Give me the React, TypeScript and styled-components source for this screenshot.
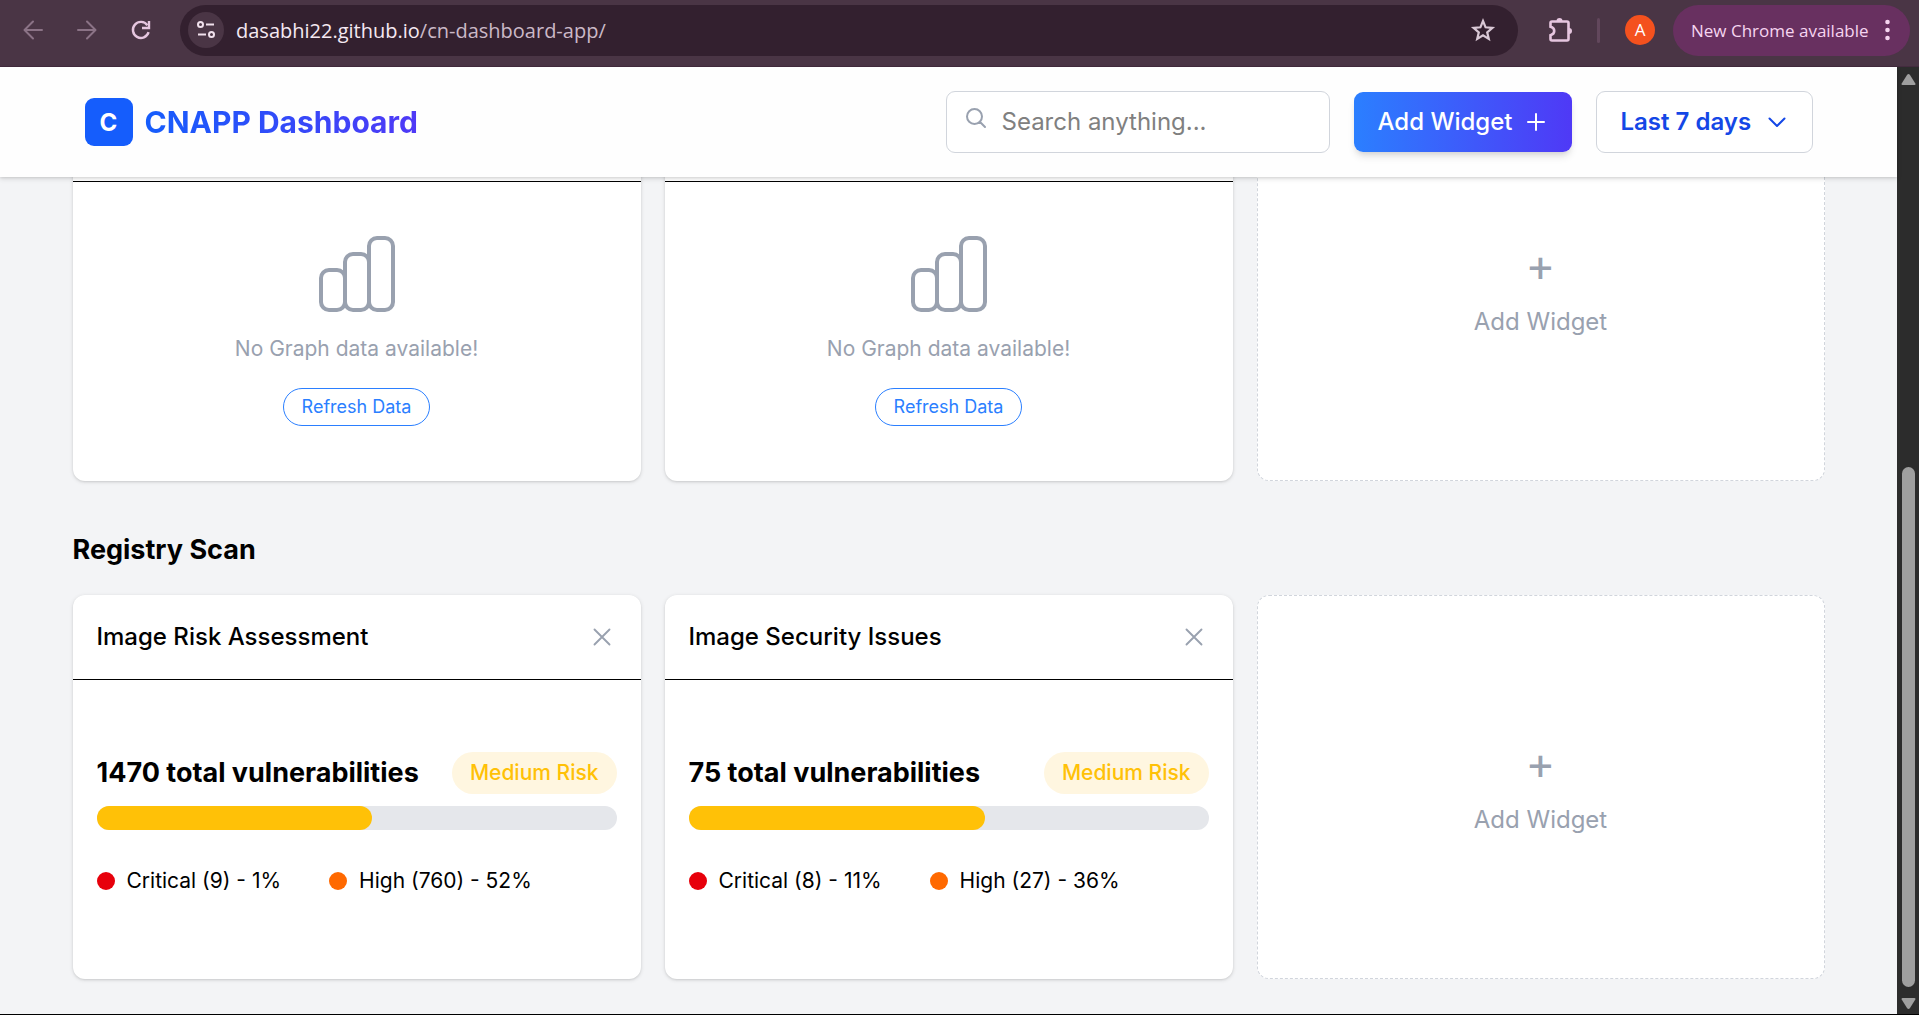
import React from "react";
import styled, { createGlobalStyle } from "styled-components";

const GlobalStyle = createGlobalStyle`
  *, *::before, *::after { box-sizing: border-box; }
  body { margin: 0; background: #f3f4f6; }
  h1, h2, h3, p, ul { margin: 0; padding: 0; }
  ul { list-style: none; }
  button, input, select { font: inherit; margin: 0; }
  button { cursor: pointer; }
`;

const gray = "#99a1af";
const sans = `Inter, "Liberation Sans", sans-serif`;
const systemSans = `"Open Sans", "Noto Sans", sans-serif`;

const Shell = styled.div`
  display: flex;
  flex-direction: column;
  height: 100vh;
  overflow: hidden;
  background: #f3f4f6;
  border-bottom: 1px solid #000;
  color: #000;
  font-family: ${sans};
`;

/* ---------- Browser bar ---------- */

const BrowserBar = styled.div`
  display: flex;
  align-items: center;
  flex: none;
  height: 67px;
  padding: 0 9px 6px 15px;
  background: #4a3545;
  border-bottom: 1px solid #432b3e;
  font-family: ${systemSans};
`;

const BarButton = styled.button<{ $dim?: boolean }>`
  display: grid;
  place-items: center;
  width: 36px;
  height: 36px;
  margin-right: 18px;
  padding: 0;
  border: 0;
  border-radius: 50%;
  background: transparent;
  color: ${(p) => (p.$dim ? "#8b7386" : "#e6c6df")};
`;

const AddressPill = styled.div`
  display: flex;
  align-items: center;
  flex: 1;
  height: 51px;
  margin-left: 3px;
  padding: 0 22px 0 8px;
  border-radius: 26px;
  background: #33202f;
  color: #e3d5df;
`;

const SiteInfo = styled.button`
  display: grid;
  place-items: center;
  width: 36px;
  height: 36px;
  padding: 0;
  border: 0;
  border-radius: 50%;
  background: #4a3545;
  color: #f0e0ec;
`;

const Address = styled.p`
  flex: 1;
  margin-left: 12px;
  padding-top: 2px;
  color: #cbb9c7;
  font-size: 20px;
  line-height: 28px;
`;

const Domain = styled.span`
  color: #f5e9f2;
`;

const StarButton = styled.button`
  display: grid;
  place-items: center;
  padding: 0;
  border: 0;
  background: transparent;
  color: #d9c8d5;
`;

const BarTools = styled.div`
  display: flex;
  align-items: center;
  padding-left: 24px;
`;

const BarDivider = styled.div`
  width: 3px;
  height: 25px;
  margin: 0 25px 0 1px;
  border-radius: 2px;
  background: #62475c;
`;

const Avatar = styled.button`
  width: 30px;
  height: 30px;
  padding: 0;
  border: 0;
  border-radius: 50%;
  background: #f4511e;
  color: #fff;
  font-size: 17px;
  line-height: 30px;
`;

const UpdatePill = styled.button`
  display: flex;
  align-items: center;
  justify-content: space-between;
  width: 237px;
  height: 51px;
  margin-left: 18px;
  padding: 0 20px 0 18px;
  border: 0;
  border-radius: 26px;
  background: #683060;
  color: #f6d5f0;
  font-size: 17px;
  white-space: nowrap;
`;

/* ---------- Page frame ---------- */

const Viewport = styled.div`
  display: flex;
  flex: 1;
  min-height: 0;
`;

const Page = styled.div`
  flex: 1;
  min-width: 0;
`;

const ScrollTrack = styled.div`
  display: flex;
  flex-direction: column;
  align-items: center;
  width: 22px;
  padding: 6px 0 4px;
  background: #2c2c2c;
`;

const ScrollRun = styled.div`
  display: flex;
  flex: 1;
  flex-direction: column;
  justify-content: flex-end;
  padding: 10px 0;
`;

const ScrollThumb = styled.div`
  width: 13px;
  height: 58.4%;
  border-radius: 7px;
  background: #9f9f9f;
`;

/* ---------- App header ---------- */

const Header = styled.header`
  position: sticky;
  top: 0;
  z-index: 1;
  height: 110px;
  background: #fefefe;
  box-shadow: 0 2px 5px rgba(0, 0, 0, 0.12), 0 1px 2px rgba(0, 0, 0, 0.08);
`;

const HeaderInner = styled.div`
  display: flex;
  align-items: center;
  justify-content: space-between;
  max-width: 1728px;
  height: 100%;
  margin: 0 auto;
`;

const Brand = styled.div`
  display: flex;
  align-items: center;
  gap: 12px;
`;

const Logo = styled.div`
  display: grid;
  place-items: center;
  width: 48px;
  height: 48px;
  border-radius: 9px;
  background: #155dfc;
  color: #fff;
  font-size: 24px;
  font-weight: 700;
`;

const BrandName = styled.h1`
  background: linear-gradient(to right, #155dfc, #4f39f6);
  background-clip: text;
  -webkit-background-clip: text;
  color: transparent;
  font-size: 30px;
  font-weight: 700;
  line-height: 42px;
`;

const Controls = styled.div`
  display: flex;
  align-items: center;
  gap: 24px;
  font-size: 24px;
`;

const SearchBox = styled.label`
  display: flex;
  align-items: center;
  gap: 14px;
  width: 384px;
  height: 62px;
  padding: 0 17px;
  border: 1px solid #d1d5dc;
  border-radius: 9px;
  background: #fff;
  color: ${gray};

  svg {
    flex: none;
    margin-bottom: 8px;
  }
`;

const SearchInput = styled.input`
  width: 100%;
  min-width: 0;
  padding: 0 0 2px;
  border: 0;
  outline: 0;
  background: transparent;
  color: #000;

  &::placeholder {
    color: #808080;
    opacity: 1;
  }
`;

const PrimaryButton = styled.button`
  display: flex;
  align-items: center;
  gap: 11px;
  height: 60px;
  padding: 0 24px 1px;
  border: 0;
  border-radius: 9px;
  background: linear-gradient(to right, #2b7fff, #4f39f6);
  box-shadow: 0 6px 9px -2px rgba(0, 0, 0, 0.12), 0 3px 6px -3px rgba(0, 0, 0, 0.12);
  color: #fff;
  font-weight: 500;
  white-space: nowrap;
`;

const RangePicker = styled.div`
  display: grid;
  align-items: center;
  color: #1447e6;

  > * {
    grid-area: 1 / 1;
  }

  svg {
    justify-self: end;
    margin-right: 24px;
    pointer-events: none;
  }
`;

const RangeSelect = styled.select`
  appearance: none;
  height: 62px;
  padding: 0 60px 2px 24px;
  border: 1px solid #d1d5dc;
  border-radius: 9px;
  background: #fff;
  color: inherit;
  font-weight: 600;
`;

/* ---------- Sections and cards ---------- */

const Main = styled.main`
  display: flex;
  flex-direction: column;
  gap: 48px;
  max-width: 1800px;
  margin: -80px auto 0;
  padding: 0 24px 35px;
`;

const SectionTitle = styled.h2`
  margin-bottom: 24px;
  font-size: 27px;
  font-weight: 700;
  line-height: 42px;
`;

const CardGrid = styled.div`
  display: grid;
  grid-template-columns: repeat(3, minmax(0, 1fr));
  grid-auto-rows: 384px;
  gap: 24px;
`;

const Card = styled.article`
  display: flex;
  flex-direction: column;
  border-radius: 12px;
  background: #fff;
  box-shadow: 0 1px 4px rgba(0, 0, 0, 0.12), 0 1px 2px rgba(0, 0, 0, 0.08);
`;

const CardHeader = styled.header`
  display: flex;
  align-items: center;
  justify-content: space-between;
  height: 85px;
  padding: 0 24px;
  border-bottom: 1px solid #000;
`;

const CardTitle = styled.h3`
  font-size: 24px;
  font-weight: 500;
  line-height: 36px;
`;

const CloseButton = styled.button`
  display: grid;
  padding: 0;
  border: 0;
  background: transparent;
  color: ${gray};
`;

const EmptyBody = styled.div`
  display: flex;
  flex: 1;
  flex-direction: column;
  align-items: center;
  justify-content: center;
  padding-bottom: 2px;
  color: ${gray};
`;

const EmptyText = styled.p`
  margin: 21px 0 23px;
  font-size: 21px;
  line-height: 32px;
`;

const RefreshButton = styled.button`
  height: 38px;
  padding: 0 18px;
  border: 1px solid #2b7fff;
  border-radius: 19px;
  background: #fff;
  color: #2b7fff;
  font-size: 18px;
`;

const RiskBody = styled.div`
  display: flex;
  flex: 1;
  flex-direction: column;
  justify-content: center;
  padding: 0 24px;
`;

const RiskHeading = styled.div`
  display: flex;
  align-items: center;
  justify-content: space-between;
`;

const RiskTotal = styled.p`
  font-size: 27px;
  font-weight: 700;
  line-height: 42px;
`;

const RiskBadge = styled.span`
  padding: 6px 18px;
  border-radius: 21px;
  background: #fff6e0;
  color: #ffc107;
  font-size: 21px;
  font-weight: 500;
  line-height: 30px;
`;

const BarTrack = styled.div`
  height: 24px;
  margin-top: 12px;
  border-radius: 12px;
  background: #e5e7eb;
`;

const BarFill = styled.div`
  height: 100%;
  border-radius: 12px;
  background: #ffc107;
`;

const Legend = styled.ul`
  display: flex;
  gap: 48px;
  padding: 36px 0 12px;
  font-size: 21px;
  line-height: 30px;
`;

const LegendItem = styled.li`
  display: flex;
  align-items: center;
  gap: 12px;
`;

const Dot = styled.span<{ $color: string }>`
  width: 18px;
  height: 18px;
  border-radius: 50%;
  background: ${(p) => p.$color};
`;

const AddCard = styled.button`
  display: flex;
  flex-direction: column;
  align-items: center;
  justify-content: center;
  gap: 12px;
  border: 1px dashed #d1d5dc;
  border-radius: 12px;
  background: #fff;
  color: ${gray};
  font-size: 24px;
  line-height: 36px;
`;

const AddSign = styled.span`
  font-size: 45px;
  font-weight: 400;
  line-height: 54px;
`;

/* ---------- Icons ---------- */

type StrokeIconProps = { size: number; path: string; width?: number };

const StrokeIcon = ({ size, path, width = 2 }: StrokeIconProps) => (
  <svg
    width={size}
    height={size}
    viewBox="0 0 24 24"
    fill="none"
    stroke="currentColor"
    strokeWidth={width}
    strokeLinecap="round"
    strokeLinejoin="round"
    aria-hidden="true"
  >
    <path d={path} />
  </svg>
);

const BarsIcon = () => (
  <svg width="76" height="76" viewBox="0 0 76 76" fill="none" stroke="currentColor" strokeWidth="4" aria-hidden="true">
    <rect x="2" y="34" width="24" height="40" rx="8" />
    <rect x="26" y="18" width="24" height="56" rx="8" />
    <rect x="50" y="2" width="24" height="72" rx="8" />
  </svg>
);

const ReloadIcon = () => (
  <svg width="24" height="24" viewBox="0 0 24 24" fill="none" stroke="currentColor" strokeWidth="2.4" aria-hidden="true">
    <path d="M19.6 14.2A8 8 0 1 1 18.4 7.2" />
    <path d="M20 3v7h-7" />
  </svg>
);

const TuneIcon = () => (
  <svg width="20" height="20" viewBox="0 0 20 20" fill="none" stroke="currentColor" strokeWidth="2" aria-hidden="true">
    <circle cx="4.5" cy="4.5" r="2.5" />
    <path d="M10 4.5h8M2 14.5h8" />
    <circle cx="15.5" cy="14.5" r="2.5" />
  </svg>
);

const StarIcon = () => (
  <svg width="26" height="26" viewBox="0 0 26 26" fill="none" stroke="currentColor" strokeWidth="2.2" aria-hidden="true">
    <path d="M13 4l2.6 6.3 6.8.6-5.2 4.4 1.6 6.7-5.8-3.6-5.8 3.6 1.6-6.7-5.2-4.4 6.8-.6z" />
  </svg>
);

const PuzzleIcon = () => (
  <svg width="28" height="28" viewBox="0 0 28 28" aria-hidden="true">
    <path
      d="M4.5 7a1.5 1.5 0 0 1 1.5-1.5h15a1.5 1.5 0 0 1 1.5 1.5v16a1.5 1.5 0 0 1-1.5 1.5h-15a1.500 1.500 0 0 1-1.500-1.500v-3.800c5-1.500 5-7 0-8.400z"
      fill="none"
      stroke="currentColor"
      strokeWidth="2.6"
    />
    <path d="M10.500 5a3 3 0 0 1 6 0zM23 12a3 3 0 0 1 0 6z" fill="currentColor" />
  </svg>
);

const DotsIcon = () => (
  <svg width="5" height="24" viewBox="0 0 5 24" fill="currentColor" aria-hidden="true">
    <circle cx="2.5" cy="4" r="2.3" />
    <circle cx="2.5" cy="12" r="2.3" />
    <circle cx="2.5" cy="20" r="2.3" />
  </svg>
);

const ScrollArrow = ({ down }: { down?: boolean }) => (
  <svg width="15" height="13" viewBox="0 0 15 13" fill="#9f9f9f" aria-hidden="true">
    <path d={down ? "M1.5 1h12q1.5 0 .8 1.5L9 11q-1.5 2-3 0L.7 2.5Q0 1 1.5 1z" : "M1.5 12h12q1.5 0 .8-1.5L9 2q-1.5-2-3 0L.7 10.5Q0 12 1.5 12z"} />
  </svg>
);

/* ---------- Widgets ---------- */

type Level = { label: string; color: string };
type RiskWidget = { title: string; total: number; fill: number; levels: Level[] };

const critical = "#e7000b";
const high = "#ff6900";

const registryWidgets: RiskWidget[] = [
  {
    title: "Image Risk Assessment",
    total: 1470,
    fill: 53,
    levels: [
      { label: "Critical (9) - 1%", color: critical },
      { label: "High (760) - 52%", color: high },
    ],
  },
  {
    title: "Image Security Issues",
    total: 75,
    fill: 57,
    levels: [
      { label: "Critical (8) - 11%", color: critical },
      { label: "High (27) - 36%", color: high },
    ],
  },
];

const EmptyGraphCard = () => (
  <Card>
    <CardHeader />
    <EmptyBody>
      <BarsIcon />
      <EmptyText>No Graph data available!</EmptyText>
      <RefreshButton type="button">Refresh Data</RefreshButton>
    </EmptyBody>
  </Card>
);

const RiskCard = ({ title, total, fill, levels }: RiskWidget) => (
  <Card>
    <CardHeader>
      <CardTitle>{title}</CardTitle>
      <CloseButton type="button" aria-label="Close">
        <StrokeIcon size={30} path="M6 18L18 6M6 6l12 12" width={1.5} />
      </CloseButton>
    </CardHeader>
    <RiskBody>
      <RiskHeading>
        <RiskTotal>{total} total vulnerabilities</RiskTotal>
        <RiskBadge>Medium Risk</RiskBadge>
      </RiskHeading>
      <BarTrack>
        <BarFill style={{ width: `${fill}%` }} />
      </BarTrack>
      <Legend>
        {levels.map((level) => (
          <LegendItem key={level.label}>
            <Dot $color={level.color} />
            {level.label}
          </LegendItem>
        ))}
      </Legend>
    </RiskBody>
  </Card>
);

const AddWidgetCard = () => (
  <AddCard type="button">
    <AddSign>+</AddSign>
    Add Widget
  </AddCard>
);

export default function App() {
  return (
    <Shell>
      <GlobalStyle />
      <BrowserBar>
        <BarButton type="button" $dim aria-label="Back">
          <StrokeIcon size={24} path="M21 12H4M12 3.5L3.5 12L12 20.5" />
        </BarButton>
        <BarButton type="button" $dim aria-label="Forward">
          <StrokeIcon size={24} path="M3 12H20M12 3.5L20.5 12L12 20.5" />
        </BarButton>
        <BarButton type="button" aria-label="Reload">
          <ReloadIcon />
        </BarButton>
        <AddressPill>
          <SiteInfo type="button" aria-label="Site information">
            <TuneIcon />
          </SiteInfo>
          <Address>
            <Domain>dasabhi22.github.io</Domain>/cn-dashboard-app/
          </Address>
          <StarButton type="button" aria-label="Bookmark">
            <StarIcon />
          </StarButton>
        </AddressPill>
        <BarTools>
          <BarButton type="button" aria-label="Extensions">
            <PuzzleIcon />
          </BarButton>
          <BarDivider />
          <Avatar type="button">A</Avatar>
          <UpdatePill type="button">
            New Chrome available
            <DotsIcon />
          </UpdatePill>
        </BarTools>
      </BrowserBar>

      <Viewport>
        <Page>
          <Header>
            <HeaderInner>
              <Brand>
                <Logo>C</Logo>
                <BrandName>CNAPP Dashboard</BrandName>
              </Brand>
              <Controls>
                <SearchBox>
                  <StrokeIcon size={24} path="M21 21l-5.2-5.2M18 10.5a7.5 7.5 0 1 1-15 0a7.5 7.5 0 0 1 15 0z" />
                  <SearchInput type="search" placeholder="Search anything..." aria-label="Search" />
                </SearchBox>
                <PrimaryButton type="button">
                  Add Widget
                  <StrokeIcon size={24} path="M12 4v16M4 12h16" />
                </PrimaryButton>
                <RangePicker>
                  <RangeSelect aria-label="Time range" defaultValue="7">
                    <option value="7">Last 7 days</option>
                  </RangeSelect>
                  <StrokeIcon size={24} path="M4.5 8.5L12 16l7.5-7.5" />
                </RangePicker>
              </Controls>
            </HeaderInner>
          </Header>

          <Main>
            <CardGrid>
              <EmptyGraphCard />
              <EmptyGraphCard />
              <AddWidgetCard />
            </CardGrid>
            <section>
              <SectionTitle>Registry Scan</SectionTitle>
              <CardGrid>
                {registryWidgets.map((widget) => (
                  <RiskCard key={widget.title} {...widget} />
                ))}
                <AddWidgetCard />
              </CardGrid>
            </section>
          </Main>
        </Page>
        <ScrollTrack aria-hidden="true">
          <ScrollArrow />
          <ScrollRun>
            <ScrollThumb />
          </ScrollRun>
          <ScrollArrow down />
        </ScrollTrack>
      </Viewport>
    </Shell>
  );
}
